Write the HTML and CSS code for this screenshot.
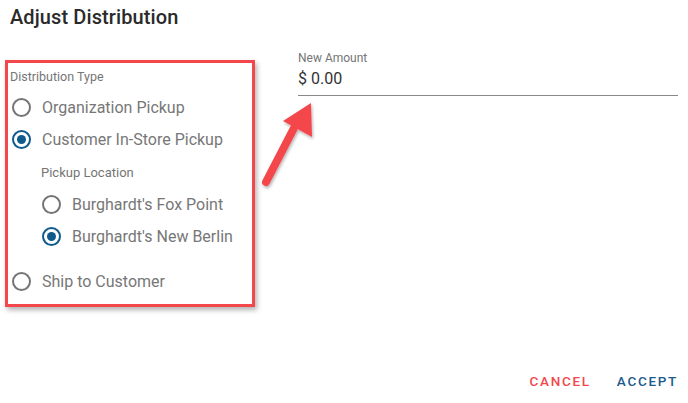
FILE: index.html
```html
<!DOCTYPE html>
<html>
<head>
<meta charset="utf-8">
<link rel="stylesheet" href="styles.css">
</head>
<body>
<div class="dialog">
  <h1 class="title">Adjust Distribution</h1>
  <div class="content">
    <div class="type-box">
      <div class="group-label">Distribution Type</div>
      <div class="radio-row"><span class="radio"></span><span class="radio-text">Organization Pickup</span></div>
      <div class="radio-row"><span class="radio checked"></span><span class="radio-text">Customer In-Store Pickup</span></div>
      <div class="nested">
        <div class="sub-label">Pickup Location</div>
        <div class="radio-row"><span class="radio"></span><span class="radio-text">Burghardt's Fox Point</span></div>
        <div class="radio-row"><span class="radio checked"></span><span class="radio-text">Burghardt's New Berlin</span></div>
      </div>
      <div class="radio-row ship"><span class="radio"></span><span class="radio-text">Ship to Customer</span></div>
    </div>
    <div class="amount">
      <div class="amount-label">New Amount</div>
      <div class="amount-value">$ 0.00</div>
    </div>
  </div>
  <div class="actions">
    <span class="btn cancel">CANCEL</span>
    <span class="btn accept">ACCEPT</span>
  </div>
  <svg class="arrow" width="80" height="110" viewBox="0 0 80 110">
    <defs>
      <filter id="sh" x="-30%" y="-30%" width="160%" height="160%">
        <feDropShadow dx="1" dy="2" stdDeviation="1.5" flood-color="#000" flood-opacity="0.3"/>
      </filter>
    </defs>
    <g filter="url(#sh)" transform="translate(-250,-95)">
      <line x1="266" y1="182" x2="294" y2="128" stroke="#f4474b" stroke-width="8" stroke-linecap="round"/>
      <polygon points="311,103 283,121 312,137" fill="#f4474b"/>
    </g>
  </svg>
</div>
</body>
</html>
```
FILE: styles.css
```css
html, body {
  margin: 0;
  padding: 0;
  background: #fff;
}
body {
  font-family: Roboto, "Liberation Sans", sans-serif;
}
.dialog {
  position: relative;
  width: 688px;
  height: 403px;
  display: flex;
  flex-direction: column;
  box-sizing: border-box;
}
.title {
  margin: 0;
  padding: 5px 10px 0;
  font-size: 20px;
  line-height: 24px;
  font-weight: 500;
  color: #2a2a2a;
  letter-spacing: 0.1px;
}
.content {
  display: flex;
  align-items: flex-start;
  margin-top: 21px;
}
.type-box {
  margin-top: 10px;
  margin-left: 5px;
  width: 250px;
  height: 247px;
  box-sizing: border-box;
  border: 3px solid #f4474b;
  box-shadow: 2px 3px 5px rgba(0,0,0,0.3);
  padding: 6px 0 0 2px;
}
.group-label {
  font-size: 12.5px;
  line-height: 16px;
  color: #757575;
  margin-bottom: 6px;
}
.radio-row {
  display: flex;
  align-items: center;
  height: 32px;
}
.radio {
  box-sizing: border-box;
  width: 19px;
  height: 19px;
  margin-left: 2px;
  margin-right: 11px;
  border: 2px solid #757575;
  border-radius: 50%;
  display: flex;
  align-items: center;
  justify-content: center;
  flex: none;
}
.radio.checked {
  border-color: #0f5a8c;
}
.radio.checked::after {
  content: "";
  width: 9px;
  height: 9px;
  border-radius: 50%;
  background: #0f5a8c;
}
.radio-text {
  font-size: 16px;
  color: #777;
}
.nested {
  padding-left: 30px;
  margin-top: 10px;
}
.sub-label {
  font-size: 13px;
  line-height: 16px;
  color: #757575;
  margin-left: 1px;
  margin-bottom: 7px;
}
.ship {
  margin-top: 13px;
}
.amount {
  margin-left: 43px;
  width: 380px;
  border-bottom: 1px solid #888;
  padding-bottom: 6px;
}
.amount-label {
  font-size: 12px;
  line-height: 14px;
  color: #757575;
  margin-top: 1px;
}
.amount-value {
  font-size: 16px;
  line-height: 20px;
  color: #333;
  margin-top: 4px;
}
.actions {
  margin-top: auto;
  display: flex;
  justify-content: flex-end;
  gap: 26px;
  padding: 0 10px 14px 0;
}
.btn {
  font-size: 13.5px;
  font-weight: 500;
  letter-spacing: 1.7px;
  line-height: 16px;
}
.cancel { color: #f4474b; }
.accept { color: #1b5a8c; }
.arrow {
  position: absolute;
  left: 250px;
  top: 95px;
  overflow: visible;
}
```
